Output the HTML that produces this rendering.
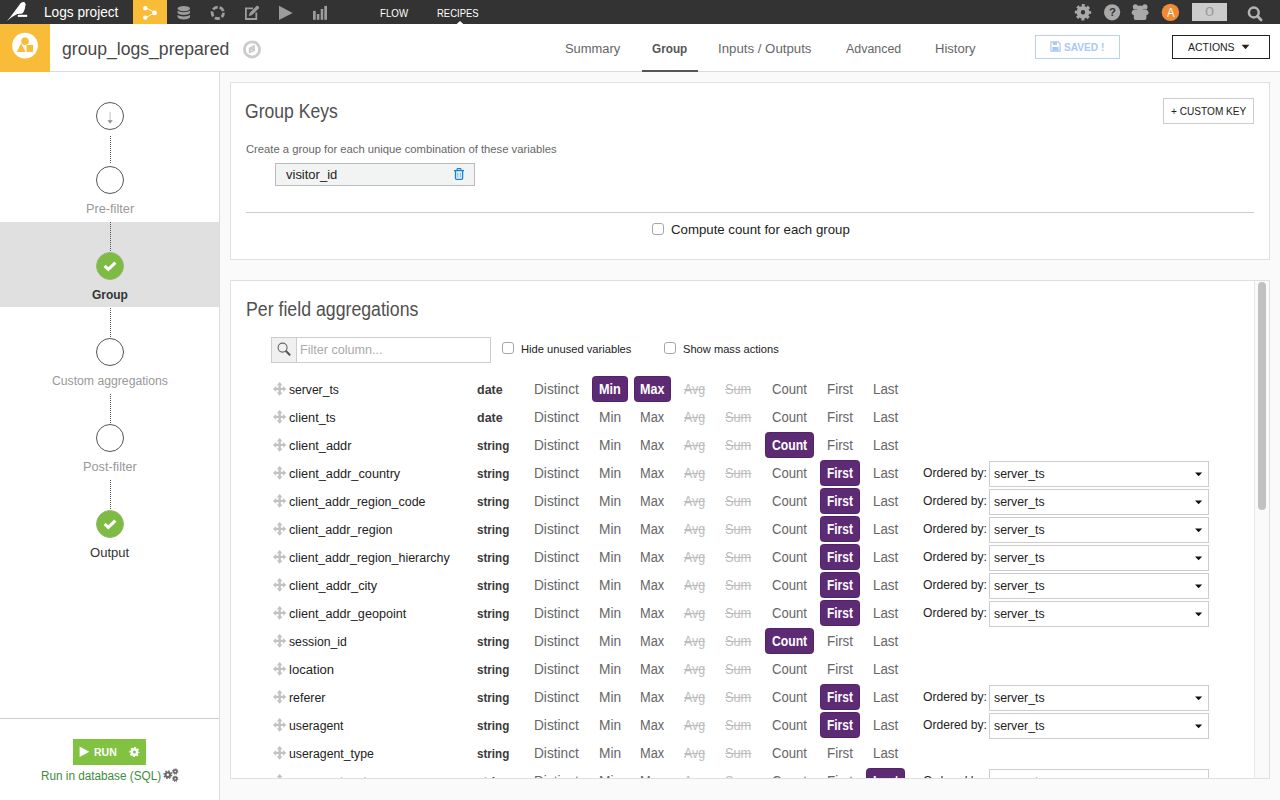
<!DOCTYPE html>
<html lang="en">
<head>
<meta charset="utf-8">
<title>group_logs_prepared - Logs project</title>
<style>
*{box-sizing:border-box;margin:0;padding:0}
html,body{width:1280px;height:800px;overflow:hidden}
body{font-family:"Liberation Sans",sans-serif;font-size:13px;color:#333;background:#fafafa;position:relative}
.a{position:absolute}
.t{position:absolute;white-space:nowrap;line-height:1;transform-origin:0 0}
svg{display:block;overflow:visible}
</style>
</head>
<body>
<div class="a" style="left:0px;top:0px;width:1280px;height:24px;background:#333"></div>
<div class="a" style="left:133px;top:0px;width:34px;height:24px;background:#f8bc38"></div>
<span class="t" style="left:43.72px;top:5px;font-size:14.5px;color:#fff;transform:scaleX(0.9416);">Logs project</span>
<span class="t" style="left:380.11px;top:8px;font-size:11px;color:#fff;transform:scaleX(0.8831);">FLOW</span>
<span class="t" style="left:436.89px;top:8px;font-size:11px;color:#fff;transform:scaleX(0.8627);">RECIPES</span>
<svg class="a" style="left:0;top:0" width="1280" height="24" viewBox="0 0 1280 24">
<path d="M6.9 21 C11 16.5 15 10.5 19.3 5 C20.3 3.2 22 1.9 23.7 2 C24.9 2.1 25.5 3.1 25.4 4.2 L26.3 4.9 L25.3 5.3 C25.2 8.6 24.3 11.6 22.6 13.2 C21 13.9 19 13.8 17.4 14 C13.6 15.6 10.4 18.4 6.9 21 Z" fill="#fff"/>
<rect x="17.8" y="14.8" width="9.4" height="2.1" fill="#fff"/>
<g fill="#fff" stroke="none"><path d="M145.5 7.6 L155 12.6 L145.5 17.8" fill="none" stroke="#fff" stroke-width=".9"/><circle cx="145.3" cy="8.2" r="2.2"/><circle cx="145.3" cy="17.6" r="2.2"/><circle cx="154.6" cy="12.9" r="2.4"/></g>
<g fill="#9c9c9c"><ellipse cx="183.8" cy="8.6" rx="6.2" ry="2.7"/><path d="M177.6 10.6 C179.4 12.9 188.2 12.9 190 10.6 V13 C188.2 15.6 179.4 15.6 177.6 13 Z"/><path d="M177.6 14.8 C179.4 17.1 188.2 17.1 190 14.8 V17.2 C188.2 20.2 179.4 20.2 177.6 17.2 Z"/></g>
<circle cx="217.8" cy="12.8" r="5.7" fill="none" stroke="#9c9c9c" stroke-width="2.8" stroke-dasharray="5.2 1.963" stroke-dashoffset="0.6"/>
<path d="M253 8.3 H245.9 V19 H256.3 V12.6" fill="none" stroke="#9c9c9c" stroke-width="1.8"/><path d="M248.7 15.9 L249.6 12.9 L256.4 6.1 Q257.6 5.3 258.6 6.4 Q259.5 7.4 258.8 8.5 L251.8 15.2 Z" fill="#9c9c9c"/>
<path d="M279 5.8 L292.7 12.9 L279 19.9 Z" fill="#9c9c9c"/>
<g fill="#9c9c9c"><rect x="313" y="10.9" width="2.7" height="8.9"/><rect x="316.8" y="14" width="2.6" height="5.8"/><rect x="320.7" y="9" width="2.5" height="10.8"/><rect x="324.3" y="5.9" width="2.7" height="13.9"/></g>
<path d="M456.7 24 L460 21 L463.3 24 Z" fill="#fff"/>
<g><circle cx="1083" cy="12.3" r="4.3" fill="none" stroke="#a9a9a9" stroke-width="4.2"/><circle cx="1083" cy="12.3" r="6.9" fill="none" stroke="#a9a9a9" stroke-width="2.6" stroke-dasharray="2.9 2.52" stroke-dashoffset="1.4"/></g>
<circle cx="1112.1" cy="12.3" r="8.1" fill="#a9a9a9"/>
<g fill="#a9a9a9"><circle cx="1135.4" cy="6.9" r="2.6"/><circle cx="1144.9" cy="6.9" r="2.6"/><circle cx="1140.1" cy="8.7" r="3.3"/><path d="M1131.6 13.6 Q1131.6 9.8 1134.6 9.8 H1145.6 Q1148.6 9.8 1148.6 13.6 L1147.2 15 H1146.4 V18.2 Q1146.4 19.9 1144.6 19.9 H1135.6 Q1133.8 19.9 1133.8 18.2 V15 H1133 Z"/></g>
<circle cx="1170.4" cy="12.4" r="8.7" fill="#f08a35"/>
<rect x="1192" y="3" width="35" height="18" fill="#ccc"/>
<circle cx="1253.8" cy="12.5" r="4.9" fill="none" stroke="#b4b4b4" stroke-width="2.5"/><path d="M1257.5 16.3 L1261.1 19.9" stroke="#b4b4b4" stroke-width="2.8" stroke-linecap="round"/>
</svg>
<span class="t" style="left:1108.96px;top:7px;font-size:11.5px;font-weight:bold;color:#333;transform:scaleX(0.9882);">?</span>
<span class="t" style="left:1166.70px;top:7px;font-size:12px;color:#fff;transform:scaleX(0.9521);">A</span>
<span class="t" style="left:1205.00px;top:6px;font-size:12.5px;color:#9a9a9a;transform:scaleX(1.3087);">0</span>
<div class="a" style="left:0px;top:24px;width:1280px;height:48px;background:#fff;border-bottom:1px solid #dadcde"></div>
<div class="a" style="left:0px;top:24px;width:50px;height:48px;background:#f8bc38"></div>
<svg class="a" style="left:0;top:24px" width="280" height="48" viewBox="0 24 280 48">
<circle cx="25" cy="45.6" r="12.9" fill="#fff"/>
<circle cx="25" cy="41.2" r="3.8" fill="#f8bc38"/><path d="M16.8 51.9 L21.2 43.2 L25.6 51.9 Z" fill="#f8bc38"/><rect x="26.5" y="45" width="6.6" height="6.9" fill="#f8bc38"/>
<circle cx="252" cy="49.4" r="7.6" fill="#fff" stroke="#ccc" stroke-width="2.8"/><path d="M248.8 47.7 L254.9 44.7 L254.9 50.9 L248.8 53.7 Z" fill="#ccc"/><circle cx="251.6" cy="50.3" r=".6" fill="#fff"/>
</svg>
<span class="t" style="left:61.77px;top:39px;font-size:19px;color:#484848;transform:scaleX(0.9261);">group_logs_prepared</span>
<span class="t" style="left:565.46px;top:43px;font-size:12.5px;color:#666;transform:scaleX(1.0337);">Summary</span>
<span class="t" style="left:651.87px;top:43px;font-size:12.5px;font-weight:bold;color:#555;transform:scaleX(0.9417);">Group</span>
<span class="t" style="left:718.27px;top:43px;font-size:12.5px;color:#666;transform:scaleX(1.0590);">Inputs / Outputs</span>
<span class="t" style="left:845.58px;top:43px;font-size:12.5px;color:#666;transform:scaleX(0.9925);">Advanced</span>
<span class="t" style="left:935.39px;top:43px;font-size:12.5px;color:#666;transform:scaleX(1.0428);">History</span>
<div class="a" style="left:642px;top:70px;width:56px;height:2px;background:#555"></div>
<div class="a" style="left:1035px;top:35px;width:85px;height:24px;border:1px solid #b5d2f6;background:#fff"></div>
<svg class="a" style="left:1050px;top:41px" width="11" height="11" viewBox="0 0 11 11"><path d="M.9 .9 H8.2 L10.1 2.8 V10.1 H.9 Z" fill="none" stroke="#a9c9f4" stroke-width="1.2"/><rect x="2.8" y="1" width="4.2" height="2.9" fill="#a9c9f4"/><rect x="2.4" y="6" width="6.2" height="3.8" fill="#a9c9f4"/></svg>
<span class="t" style="left:1063.56px;top:42px;font-size:11.5px;font-weight:bold;color:#a9c9f4;transform:scaleX(0.8790);">SAVED !</span>
<div class="a" style="left:1172px;top:35px;width:98px;height:24px;border:1px solid #222;background:#fff"></div>
<span class="t" style="left:1187.72px;top:42px;font-size:11.5px;color:#222;transform:scaleX(0.9116);">ACTIONS</span>
<svg class="a" style="left:1241px;top:44px" width="9" height="6" viewBox="0 0 9 6"><path d="M.6 .8 H8.4 L4.5 5.2 Z" fill="#222"/></svg>
<div class="a" style="left:0px;top:72px;width:220px;height:728px;background:#fff;border-right:1px solid #dadcde"></div>
<div class="a" style="left:0px;top:222px;width:219px;height:85px;background:#e0e0e0"></div>
<div class="a" style="left:110px;top:136px;width:1px;height:28px;background:repeating-linear-gradient(to bottom,#555 0,#555 1px,transparent 1px,transparent 2px)"></div>
<div class="a" style="left:110px;top:222px;width:1px;height:29px;background:repeating-linear-gradient(to bottom,#555 0,#555 1px,transparent 1px,transparent 2px)"></div>
<div class="a" style="left:110px;top:308px;width:1px;height:29px;background:repeating-linear-gradient(to bottom,#555 0,#555 1px,transparent 1px,transparent 2px)"></div>
<div class="a" style="left:110px;top:394px;width:1px;height:29px;background:repeating-linear-gradient(to bottom,#555 0,#555 1px,transparent 1px,transparent 2px)"></div>
<div class="a" style="left:110px;top:480px;width:1px;height:29px;background:repeating-linear-gradient(to bottom,#555 0,#555 1px,transparent 1px,transparent 2px)"></div>
<div class="a" style="left:96px;top:102px;width:28px;height:28px;border-radius:50%;background:#fff;border:1px solid #555"></div>
<div class="a" style="left:96px;top:166px;width:28px;height:28px;border-radius:50%;background:#fff;border:1px solid #555"></div>
<div class="a" style="left:96px;top:252px;width:28px;height:28px;border-radius:50%;background:#7dbb42;border:1px solid #98b877"></div>
<svg class="a" style="left:102px;top:260px" width="16" height="12" viewBox="0 0 16 12"><path d="M2.6 5.9 L6.3 9.3 L13.4 2.6" fill="none" stroke="#fff" stroke-width="3.1"/></svg>
<div class="a" style="left:96px;top:338px;width:28px;height:28px;border-radius:50%;background:#fff;border:1px solid #555"></div>
<div class="a" style="left:96px;top:424px;width:28px;height:28px;border-radius:50%;background:#fff;border:1px solid #555"></div>
<div class="a" style="left:96px;top:510px;width:28px;height:28px;border-radius:50%;background:#7dbb42;border:1px solid #98b877"></div>
<svg class="a" style="left:102px;top:518px" width="16" height="12" viewBox="0 0 16 12"><path d="M2.6 5.9 L6.3 9.3 L13.4 2.6" fill="none" stroke="#fff" stroke-width="3.1"/></svg>
<svg class="a" style="left:106px;top:111px" width="9" height="14" viewBox="106 111 9 14"><rect x="109.6" y="112" width="1" height="9.5" fill="#b9c0ca"/><path d="M107.5 120.3 H112.7 L110.1 123.6 Z" fill="#8c8c8c"/></svg>
<span class="t" style="left:85.86px;top:203px;font-size:12.5px;color:#999;transform:scaleX(1.0196);">Pre-filter</span>
<span class="t" style="left:92.04px;top:289px;font-size:12.5px;font-weight:bold;color:#333;transform:scaleX(0.9578);">Group</span>
<span class="t" style="left:52.02px;top:375px;font-size:12.5px;color:#999;transform:scaleX(0.9760);">Custom aggregations</span>
<span class="t" style="left:82.50px;top:461px;font-size:12.5px;color:#999;transform:scaleX(1.0200);">Post-filter</span>
<span class="t" style="left:90.03px;top:547px;font-size:12.5px;color:#333;transform:scaleX(1.0452);">Output</span>
<div class="a" style="left:0px;top:718px;width:219px;height:1px;background:#ccc"></div>
<div class="a" style="left:73px;top:739px;width:73px;height:26px;background:#81c241"></div>
<svg class="a" style="left:79px;top:746px" width="11" height="12" viewBox="0 0 11 12"><path d="M.6 .4 L10.3 5.75 L.6 11.1 Z" fill="#fff"/></svg>
<span class="t" style="left:94.12px;top:747px;font-size:11.5px;font-weight:bold;color:#fff;transform:scaleX(0.9173);">RUN</span>
<svg class="a" style="left:129px;top:746px" width="11" height="12" viewBox="0 0 11 12"><circle cx="5.4" cy="6" r="2.7" fill="none" stroke="#fff" stroke-width="2.4"/><circle cx="5.4" cy="6" r="4.3" fill="none" stroke="#fff" stroke-width="1.6" stroke-dasharray="1.75 1.63" stroke-dashoffset=".8"/></svg>
<span class="t" style="left:41.05px;top:770px;font-size:12.5px;color:#3d8b3d;transform:scaleX(0.9392);">Run in database (SQL)</span>
<svg class="a" style="left:163px;top:768px" width="16" height="14" viewBox="0 0 16 14"><g fill="none" stroke="#6a6a6a"><circle cx="4.8" cy="6.8" r="2.3" stroke-width="2.2"/><circle cx="4.8" cy="6.8" r="3.8" stroke-width="1.4" stroke-dasharray="1.55 1.43"/><circle cx="12.2" cy="3.5" r="1.6" stroke-width="1.7"/><circle cx="12.2" cy="3.5" r="2.6" stroke-width="1.1" stroke-dasharray="1.02 1.02"/><circle cx="12.2" cy="10.7" r="1.6" stroke-width="1.7"/><circle cx="12.2" cy="10.7" r="2.6" stroke-width="1.1" stroke-dasharray="1.02 1.02"/></g></svg>
<div class="a" style="left:230px;top:82px;width:1040px;height:178px;background:#fff;border:1px solid #dfe0e1"></div>
<span class="t" style="left:245.23px;top:101px;font-size:20px;color:#505050;transform:scaleX(0.8781);">Group Keys</span>
<div class="a" style="left:1163px;top:98px;width:91px;height:26px;border:1px solid #ccc;background:#fff"></div>
<span class="t" style="left:1171.24px;top:106px;font-size:11px;color:#222;transform:scaleX(0.9183);">+ CUSTOM KEY</span>
<span class="t" style="left:245.77px;top:144px;font-size:11.5px;color:#666;transform:scaleX(0.9776);">Create a group for each unique combination of these variables</span>
<div class="a" style="left:275px;top:163px;width:200px;height:23px;border:1px solid #b9bbbd;background:#f2f3f3"></div>
<span class="t" style="left:286.17px;top:169px;font-size:12.5px;color:#222;transform:scaleX(1.0389);">visitor_id</span>
<svg class="a" style="left:453px;top:167px" width="12" height="14" viewBox="453 167 12 14"><g fill="none" stroke="#1583d6"><path d="M453.9 170.6 H464" stroke-width="1.3"/><path d="M457 170.4 V169.4 Q457 168.6 457.8 168.6 H460.2 Q461 168.6 461 169.4 V170.4" stroke-width="1.1"/><path d="M455.5 171 V178.3 Q455.5 179.4 456.6 179.4 H461.5 Q462.6 179.4 462.6 178.3 V171" stroke-width="1.3"/><path d="M457.8 172.6 V177.6 M460.3 172.6 V177.6" stroke-width="1" stroke-opacity=".55"/></g></svg>
<div class="a" style="left:246px;top:212px;width:1008px;height:1px;background:#ccc"></div>
<div class="a" style="left:652px;top:223px;width:12px;height:12px;border:1px solid #a6a6a6;border-radius:3px;background:#fff"></div>
<span class="t" style="left:671.27px;top:223px;font-size:13px;color:#222;transform:scaleX(1.0179);">Compute count for each group</span>
<div class="a" style="left:230px;top:280px;width:1040px;height:499px;background:#fff;border:1px solid #dfe0e1"></div>
<div class="a" style="left:0;top:0;width:1280px;height:778px;overflow:hidden">
<span class="t" style="left:245.50px;top:299px;font-size:20px;color:#505050;transform:scaleX(0.8859);">Per field aggregations</span>
<div class="a" style="left:271px;top:337px;width:220px;height:26px;border:1px solid #ccc;background:#fff"></div>
<div class="a" style="left:272px;top:338px;width:25px;height:24px;background:#f0f0f0;border-right:1px solid #ccc"></div>
<svg class="a" style="left:277px;top:342px" width="15" height="15" viewBox="0 0 15 15"><circle cx="5.6" cy="5.6" r="4.5" fill="none" stroke="#666" stroke-width="1.1"/><path d="M9.2 9.2 L12.6 12.8" stroke="#555" stroke-width="2" stroke-linecap="round"/></svg>
<span class="t" style="left:300.39px;top:344px;font-size:12.5px;color:#aaa;transform:scaleX(1.0069);">Filter column...</span>
<div class="a" style="left:502px;top:342px;width:12px;height:12px;border:1px solid #a6a6a6;border-radius:3px;background:#fff"></div>
<span class="t" style="left:521.29px;top:344px;font-size:11.5px;color:#222;transform:scaleX(0.9702);">Hide unused variables</span>
<div class="a" style="left:664px;top:342px;width:12px;height:12px;border:1px solid #a6a6a6;border-radius:3px;background:#fff"></div>
<span class="t" style="left:682.77px;top:344px;font-size:11.5px;color:#222;transform:scaleX(0.9663);">Show mass actions</span>
<svg class="a" style="left:272.7px;top:382px" width="13.3" height="13.8" viewBox="0 0 13.3 13.8"><path d="M6.65 0 L9.6 3.2 H7.85 V5.7 H10.1 V3.95 L13.3 6.9 L10.1 9.85 V8.1 H7.85 V10.6 H9.6 L6.65 13.8 L3.7 10.6 H5.45 V8.1 H3.2 V9.85 L0 6.9 L3.2 3.95 V5.7 H5.45 V3.2 H3.7 Z" fill="#c2c2c2"/></svg>
<span class="t" style="left:288.88px;top:384px;font-size:12.5px;color:#222;transform:scaleX(0.9689);">server_ts</span>
<span class="t" style="left:476.63px;top:384px;font-size:12px;font-weight:bold;color:#3a3a3a;transform:scaleX(1.0404);">date</span>
<span class="t" style="left:534.25px;top:382px;font-size:14px;color:#666;transform:scaleX(0.9753);">Distinct</span>
<div class="a" style="left:592px;top:376px;width:36px;height:26px;background:#5d2a74;border:1px solid #53236a;border-radius:3.5px"></div>
<span class="t" style="left:599.04px;top:382px;font-size:14px;font-weight:bold;color:#fff;transform:scaleX(0.9055);">Min</span>
<div class="a" style="left:634px;top:376px;width:37px;height:26px;background:#5d2a74;border:1px solid #53236a;border-radius:3.5px"></div>
<span class="t" style="left:640.31px;top:382px;font-size:14px;font-weight:bold;color:#fff;transform:scaleX(0.8951);">Max</span>
<span class="t" style="left:683.87px;top:382px;font-size:14px;color:#bdbdbd;transform:scaleX(0.8833);text-decoration:line-through">Avg</span>
<span class="t" style="left:724.62px;top:382px;font-size:14px;color:#bdbdbd;transform:scaleX(0.9110);text-decoration:line-through">Sum</span>
<span class="t" style="left:771.74px;top:382px;font-size:14px;color:#666;transform:scaleX(0.9363);">Count</span>
<span class="t" style="left:826.82px;top:382px;font-size:14px;color:#666;transform:scaleX(0.9540);">First</span>
<span class="t" style="left:872.71px;top:382px;font-size:14px;color:#666;transform:scaleX(0.9531);">Last</span>
<svg class="a" style="left:272.7px;top:410px" width="13.3" height="13.8" viewBox="0 0 13.3 13.8"><path d="M6.65 0 L9.6 3.2 H7.85 V5.7 H10.1 V3.95 L13.3 6.9 L10.1 9.85 V8.1 H7.85 V10.6 H9.6 L6.65 13.8 L3.7 10.6 H5.45 V8.1 H3.2 V9.85 L0 6.9 L3.2 3.95 V5.7 H5.45 V3.2 H3.7 Z" fill="#c2c2c2"/></svg>
<span class="t" style="left:288.86px;top:412px;font-size:12.5px;color:#222;transform:scaleX(1.0171);">client_ts</span>
<span class="t" style="left:476.63px;top:412px;font-size:12px;font-weight:bold;color:#3a3a3a;transform:scaleX(1.0404);">date</span>
<span class="t" style="left:534.25px;top:410px;font-size:14px;color:#666;transform:scaleX(0.9753);">Distinct</span>
<span class="t" style="left:598.95px;top:410px;font-size:14px;color:#666;transform:scaleX(0.9799);">Min</span>
<span class="t" style="left:640.40px;top:410px;font-size:14px;color:#666;transform:scaleX(0.9132);">Max</span>
<span class="t" style="left:683.87px;top:410px;font-size:14px;color:#bdbdbd;transform:scaleX(0.8833);text-decoration:line-through">Avg</span>
<span class="t" style="left:724.62px;top:410px;font-size:14px;color:#bdbdbd;transform:scaleX(0.9110);text-decoration:line-through">Sum</span>
<span class="t" style="left:771.74px;top:410px;font-size:14px;color:#666;transform:scaleX(0.9363);">Count</span>
<span class="t" style="left:826.82px;top:410px;font-size:14px;color:#666;transform:scaleX(0.9540);">First</span>
<span class="t" style="left:872.71px;top:410px;font-size:14px;color:#666;transform:scaleX(0.9531);">Last</span>
<svg class="a" style="left:272.7px;top:438px" width="13.3" height="13.8" viewBox="0 0 13.3 13.8"><path d="M6.65 0 L9.6 3.2 H7.85 V5.7 H10.1 V3.95 L13.3 6.9 L10.1 9.85 V8.1 H7.85 V10.6 H9.6 L6.65 13.8 L3.7 10.6 H5.45 V8.1 H3.2 V9.85 L0 6.9 L3.2 3.95 V5.7 H5.45 V3.2 H3.7 Z" fill="#c2c2c2"/></svg>
<span class="t" style="left:288.73px;top:440px;font-size:12.5px;color:#222;transform:scaleX(1.0216);">client_addr</span>
<span class="t" style="left:476.74px;top:440px;font-size:12px;font-weight:bold;color:#3a3a3a;transform:scaleX(0.9688);">string</span>
<span class="t" style="left:534.25px;top:438px;font-size:14px;color:#666;transform:scaleX(0.9753);">Distinct</span>
<span class="t" style="left:598.95px;top:438px;font-size:14px;color:#666;transform:scaleX(0.9799);">Min</span>
<span class="t" style="left:640.40px;top:438px;font-size:14px;color:#666;transform:scaleX(0.9132);">Max</span>
<span class="t" style="left:683.87px;top:438px;font-size:14px;color:#bdbdbd;transform:scaleX(0.8833);text-decoration:line-through">Avg</span>
<span class="t" style="left:724.62px;top:438px;font-size:14px;color:#bdbdbd;transform:scaleX(0.9110);text-decoration:line-through">Sum</span>
<div class="a" style="left:765px;top:432px;width:49px;height:26px;background:#5d2a74;border:1px solid #53236a;border-radius:3.5px"></div>
<span class="t" style="left:771.94px;top:438px;font-size:14px;font-weight:bold;color:#fff;transform:scaleX(0.8702);">Count</span>
<span class="t" style="left:826.82px;top:438px;font-size:14px;color:#666;transform:scaleX(0.9540);">First</span>
<span class="t" style="left:872.71px;top:438px;font-size:14px;color:#666;transform:scaleX(0.9531);">Last</span>
<svg class="a" style="left:272.7px;top:466px" width="13.3" height="13.8" viewBox="0 0 13.3 13.8"><path d="M6.65 0 L9.6 3.2 H7.85 V5.7 H10.1 V3.95 L13.3 6.9 L10.1 9.85 V8.1 H7.85 V10.6 H9.6 L6.65 13.8 L3.7 10.6 H5.45 V8.1 H3.2 V9.85 L0 6.9 L3.2 3.95 V5.7 H5.45 V3.2 H3.7 Z" fill="#c2c2c2"/></svg>
<span class="t" style="left:288.75px;top:468px;font-size:12.5px;color:#222;transform:scaleX(1.0197);">client_addr_country</span>
<span class="t" style="left:476.74px;top:468px;font-size:12px;font-weight:bold;color:#3a3a3a;transform:scaleX(0.9688);">string</span>
<span class="t" style="left:534.25px;top:466px;font-size:14px;color:#666;transform:scaleX(0.9753);">Distinct</span>
<span class="t" style="left:598.95px;top:466px;font-size:14px;color:#666;transform:scaleX(0.9799);">Min</span>
<span class="t" style="left:640.40px;top:466px;font-size:14px;color:#666;transform:scaleX(0.9132);">Max</span>
<span class="t" style="left:683.87px;top:466px;font-size:14px;color:#bdbdbd;transform:scaleX(0.8833);text-decoration:line-through">Avg</span>
<span class="t" style="left:724.62px;top:466px;font-size:14px;color:#bdbdbd;transform:scaleX(0.9110);text-decoration:line-through">Sum</span>
<span class="t" style="left:771.74px;top:466px;font-size:14px;color:#666;transform:scaleX(0.9363);">Count</span>
<div class="a" style="left:820px;top:460px;width:40px;height:26px;background:#5d2a74;border:1px solid #53236a;border-radius:3.5px"></div>
<span class="t" style="left:827.26px;top:466px;font-size:14px;font-weight:bold;color:#fff;transform:scaleX(0.8526);">First</span>
<span class="t" style="left:872.71px;top:466px;font-size:14px;color:#666;transform:scaleX(0.9531);">Last</span>
<span class="t" style="left:922.78px;top:467px;font-size:12.5px;color:#222;transform:scaleX(0.9693);">Ordered by:</span>
<div class="a" style="left:989px;top:461px;width:220px;height:26px;border:1px solid #ccc;background:#fff"></div>
<span class="t" style="left:993.92px;top:468px;font-size:12.5px;color:#222;transform:scaleX(0.9840);">server_ts</span>
<svg class="a" style="left:1195px;top:472px" width="8" height="5" viewBox="0 0 8 5"><path d="M0 .4 H7.2 L3.6 4.3 Z" fill="#111"/></svg>
<svg class="a" style="left:272.7px;top:494px" width="13.3" height="13.8" viewBox="0 0 13.3 13.8"><path d="M6.65 0 L9.6 3.2 H7.85 V5.7 H10.1 V3.95 L13.3 6.9 L10.1 9.85 V8.1 H7.85 V10.6 H9.6 L6.65 13.8 L3.7 10.6 H5.45 V8.1 H3.2 V9.85 L0 6.9 L3.2 3.95 V5.7 H5.45 V3.2 H3.7 Z" fill="#c2c2c2"/></svg>
<span class="t" style="left:288.59px;top:496px;font-size:12.5px;color:#222;transform:scaleX(0.9971);">client_addr_region_code</span>
<span class="t" style="left:476.74px;top:496px;font-size:12px;font-weight:bold;color:#3a3a3a;transform:scaleX(0.9688);">string</span>
<span class="t" style="left:534.25px;top:494px;font-size:14px;color:#666;transform:scaleX(0.9753);">Distinct</span>
<span class="t" style="left:598.95px;top:494px;font-size:14px;color:#666;transform:scaleX(0.9799);">Min</span>
<span class="t" style="left:640.40px;top:494px;font-size:14px;color:#666;transform:scaleX(0.9132);">Max</span>
<span class="t" style="left:683.87px;top:494px;font-size:14px;color:#bdbdbd;transform:scaleX(0.8833);text-decoration:line-through">Avg</span>
<span class="t" style="left:724.62px;top:494px;font-size:14px;color:#bdbdbd;transform:scaleX(0.9110);text-decoration:line-through">Sum</span>
<span class="t" style="left:771.74px;top:494px;font-size:14px;color:#666;transform:scaleX(0.9363);">Count</span>
<div class="a" style="left:820px;top:488px;width:40px;height:26px;background:#5d2a74;border:1px solid #53236a;border-radius:3.5px"></div>
<span class="t" style="left:827.26px;top:494px;font-size:14px;font-weight:bold;color:#fff;transform:scaleX(0.8526);">First</span>
<span class="t" style="left:872.71px;top:494px;font-size:14px;color:#666;transform:scaleX(0.9531);">Last</span>
<span class="t" style="left:922.78px;top:495px;font-size:12.5px;color:#222;transform:scaleX(0.9693);">Ordered by:</span>
<div class="a" style="left:989px;top:489px;width:220px;height:26px;border:1px solid #ccc;background:#fff"></div>
<span class="t" style="left:993.92px;top:496px;font-size:12.5px;color:#222;transform:scaleX(0.9840);">server_ts</span>
<svg class="a" style="left:1195px;top:500px" width="8" height="5" viewBox="0 0 8 5"><path d="M0 .4 H7.2 L3.6 4.3 Z" fill="#111"/></svg>
<svg class="a" style="left:272.7px;top:522px" width="13.3" height="13.8" viewBox="0 0 13.3 13.8"><path d="M6.65 0 L9.6 3.2 H7.85 V5.7 H10.1 V3.95 L13.3 6.9 L10.1 9.85 V8.1 H7.85 V10.6 H9.6 L6.65 13.8 L3.7 10.6 H5.45 V8.1 H3.2 V9.85 L0 6.9 L3.2 3.95 V5.7 H5.45 V3.2 H3.7 Z" fill="#c2c2c2"/></svg>
<span class="t" style="left:288.89px;top:524px;font-size:12.5px;color:#222;transform:scaleX(1.0063);">client_addr_region</span>
<span class="t" style="left:476.74px;top:524px;font-size:12px;font-weight:bold;color:#3a3a3a;transform:scaleX(0.9688);">string</span>
<span class="t" style="left:534.25px;top:522px;font-size:14px;color:#666;transform:scaleX(0.9753);">Distinct</span>
<span class="t" style="left:598.95px;top:522px;font-size:14px;color:#666;transform:scaleX(0.9799);">Min</span>
<span class="t" style="left:640.40px;top:522px;font-size:14px;color:#666;transform:scaleX(0.9132);">Max</span>
<span class="t" style="left:683.87px;top:522px;font-size:14px;color:#bdbdbd;transform:scaleX(0.8833);text-decoration:line-through">Avg</span>
<span class="t" style="left:724.62px;top:522px;font-size:14px;color:#bdbdbd;transform:scaleX(0.9110);text-decoration:line-through">Sum</span>
<span class="t" style="left:771.74px;top:522px;font-size:14px;color:#666;transform:scaleX(0.9363);">Count</span>
<div class="a" style="left:820px;top:516px;width:40px;height:26px;background:#5d2a74;border:1px solid #53236a;border-radius:3.5px"></div>
<span class="t" style="left:827.26px;top:522px;font-size:14px;font-weight:bold;color:#fff;transform:scaleX(0.8526);">First</span>
<span class="t" style="left:872.71px;top:522px;font-size:14px;color:#666;transform:scaleX(0.9531);">Last</span>
<span class="t" style="left:922.78px;top:523px;font-size:12.5px;color:#222;transform:scaleX(0.9693);">Ordered by:</span>
<div class="a" style="left:989px;top:517px;width:220px;height:26px;border:1px solid #ccc;background:#fff"></div>
<span class="t" style="left:993.92px;top:524px;font-size:12.5px;color:#222;transform:scaleX(0.9840);">server_ts</span>
<svg class="a" style="left:1195px;top:528px" width="8" height="5" viewBox="0 0 8 5"><path d="M0 .4 H7.2 L3.6 4.3 Z" fill="#111"/></svg>
<svg class="a" style="left:272.7px;top:550px" width="13.3" height="13.8" viewBox="0 0 13.3 13.8"><path d="M6.65 0 L9.6 3.2 H7.85 V5.7 H10.1 V3.95 L13.3 6.9 L10.1 9.85 V8.1 H7.85 V10.6 H9.6 L6.65 13.8 L3.7 10.6 H5.45 V8.1 H3.2 V9.85 L0 6.9 L3.2 3.95 V5.7 H5.45 V3.2 H3.7 Z" fill="#c2c2c2"/></svg>
<span class="t" style="left:288.80px;top:552px;font-size:12.5px;color:#222;transform:scaleX(0.9970);">client_addr_region_hierarchy</span>
<span class="t" style="left:476.74px;top:552px;font-size:12px;font-weight:bold;color:#3a3a3a;transform:scaleX(0.9688);">string</span>
<span class="t" style="left:534.25px;top:550px;font-size:14px;color:#666;transform:scaleX(0.9753);">Distinct</span>
<span class="t" style="left:598.95px;top:550px;font-size:14px;color:#666;transform:scaleX(0.9799);">Min</span>
<span class="t" style="left:640.40px;top:550px;font-size:14px;color:#666;transform:scaleX(0.9132);">Max</span>
<span class="t" style="left:683.87px;top:550px;font-size:14px;color:#bdbdbd;transform:scaleX(0.8833);text-decoration:line-through">Avg</span>
<span class="t" style="left:724.62px;top:550px;font-size:14px;color:#bdbdbd;transform:scaleX(0.9110);text-decoration:line-through">Sum</span>
<span class="t" style="left:771.74px;top:550px;font-size:14px;color:#666;transform:scaleX(0.9363);">Count</span>
<div class="a" style="left:820px;top:544px;width:40px;height:26px;background:#5d2a74;border:1px solid #53236a;border-radius:3.5px"></div>
<span class="t" style="left:827.26px;top:550px;font-size:14px;font-weight:bold;color:#fff;transform:scaleX(0.8526);">First</span>
<span class="t" style="left:872.71px;top:550px;font-size:14px;color:#666;transform:scaleX(0.9531);">Last</span>
<span class="t" style="left:922.78px;top:551px;font-size:12.5px;color:#222;transform:scaleX(0.9693);">Ordered by:</span>
<div class="a" style="left:989px;top:545px;width:220px;height:26px;border:1px solid #ccc;background:#fff"></div>
<span class="t" style="left:993.92px;top:552px;font-size:12.5px;color:#222;transform:scaleX(0.9840);">server_ts</span>
<svg class="a" style="left:1195px;top:556px" width="8" height="5" viewBox="0 0 8 5"><path d="M0 .4 H7.2 L3.6 4.3 Z" fill="#111"/></svg>
<svg class="a" style="left:272.7px;top:578px" width="13.3" height="13.8" viewBox="0 0 13.3 13.8"><path d="M6.65 0 L9.6 3.2 H7.85 V5.7 H10.1 V3.95 L13.3 6.9 L10.1 9.85 V8.1 H7.85 V10.6 H9.6 L6.65 13.8 L3.7 10.6 H5.45 V8.1 H3.2 V9.85 L0 6.9 L3.2 3.95 V5.7 H5.45 V3.2 H3.7 Z" fill="#c2c2c2"/></svg>
<span class="t" style="left:288.64px;top:580px;font-size:12.5px;color:#222;transform:scaleX(1.0152);">client_addr_city</span>
<span class="t" style="left:476.74px;top:580px;font-size:12px;font-weight:bold;color:#3a3a3a;transform:scaleX(0.9688);">string</span>
<span class="t" style="left:534.25px;top:578px;font-size:14px;color:#666;transform:scaleX(0.9753);">Distinct</span>
<span class="t" style="left:598.95px;top:578px;font-size:14px;color:#666;transform:scaleX(0.9799);">Min</span>
<span class="t" style="left:640.40px;top:578px;font-size:14px;color:#666;transform:scaleX(0.9132);">Max</span>
<span class="t" style="left:683.87px;top:578px;font-size:14px;color:#bdbdbd;transform:scaleX(0.8833);text-decoration:line-through">Avg</span>
<span class="t" style="left:724.62px;top:578px;font-size:14px;color:#bdbdbd;transform:scaleX(0.9110);text-decoration:line-through">Sum</span>
<span class="t" style="left:771.74px;top:578px;font-size:14px;color:#666;transform:scaleX(0.9363);">Count</span>
<div class="a" style="left:820px;top:572px;width:40px;height:26px;background:#5d2a74;border:1px solid #53236a;border-radius:3.5px"></div>
<span class="t" style="left:827.26px;top:578px;font-size:14px;font-weight:bold;color:#fff;transform:scaleX(0.8526);">First</span>
<span class="t" style="left:872.71px;top:578px;font-size:14px;color:#666;transform:scaleX(0.9531);">Last</span>
<span class="t" style="left:922.78px;top:579px;font-size:12.5px;color:#222;transform:scaleX(0.9693);">Ordered by:</span>
<div class="a" style="left:989px;top:573px;width:220px;height:26px;border:1px solid #ccc;background:#fff"></div>
<span class="t" style="left:993.92px;top:580px;font-size:12.5px;color:#222;transform:scaleX(0.9840);">server_ts</span>
<svg class="a" style="left:1195px;top:584px" width="8" height="5" viewBox="0 0 8 5"><path d="M0 .4 H7.2 L3.6 4.3 Z" fill="#111"/></svg>
<svg class="a" style="left:272.7px;top:606px" width="13.3" height="13.8" viewBox="0 0 13.3 13.8"><path d="M6.65 0 L9.6 3.2 H7.85 V5.7 H10.1 V3.95 L13.3 6.9 L10.1 9.85 V8.1 H7.85 V10.6 H9.6 L6.65 13.8 L3.7 10.6 H5.45 V8.1 H3.2 V9.85 L0 6.9 L3.2 3.95 V5.7 H5.45 V3.2 H3.7 Z" fill="#c2c2c2"/></svg>
<span class="t" style="left:288.88px;top:608px;font-size:12.5px;color:#222;transform:scaleX(1.0110);">client_addr_geopoint</span>
<span class="t" style="left:476.74px;top:608px;font-size:12px;font-weight:bold;color:#3a3a3a;transform:scaleX(0.9688);">string</span>
<span class="t" style="left:534.25px;top:606px;font-size:14px;color:#666;transform:scaleX(0.9753);">Distinct</span>
<span class="t" style="left:598.95px;top:606px;font-size:14px;color:#666;transform:scaleX(0.9799);">Min</span>
<span class="t" style="left:640.40px;top:606px;font-size:14px;color:#666;transform:scaleX(0.9132);">Max</span>
<span class="t" style="left:683.87px;top:606px;font-size:14px;color:#bdbdbd;transform:scaleX(0.8833);text-decoration:line-through">Avg</span>
<span class="t" style="left:724.62px;top:606px;font-size:14px;color:#bdbdbd;transform:scaleX(0.9110);text-decoration:line-through">Sum</span>
<span class="t" style="left:771.74px;top:606px;font-size:14px;color:#666;transform:scaleX(0.9363);">Count</span>
<div class="a" style="left:820px;top:600px;width:40px;height:26px;background:#5d2a74;border:1px solid #53236a;border-radius:3.5px"></div>
<span class="t" style="left:827.26px;top:606px;font-size:14px;font-weight:bold;color:#fff;transform:scaleX(0.8526);">First</span>
<span class="t" style="left:872.71px;top:606px;font-size:14px;color:#666;transform:scaleX(0.9531);">Last</span>
<span class="t" style="left:922.78px;top:607px;font-size:12.5px;color:#222;transform:scaleX(0.9693);">Ordered by:</span>
<div class="a" style="left:989px;top:601px;width:220px;height:26px;border:1px solid #ccc;background:#fff"></div>
<span class="t" style="left:993.92px;top:608px;font-size:12.5px;color:#222;transform:scaleX(0.9840);">server_ts</span>
<svg class="a" style="left:1195px;top:612px" width="8" height="5" viewBox="0 0 8 5"><path d="M0 .4 H7.2 L3.6 4.3 Z" fill="#111"/></svg>
<svg class="a" style="left:272.7px;top:634px" width="13.3" height="13.8" viewBox="0 0 13.3 13.8"><path d="M6.65 0 L9.6 3.2 H7.85 V5.7 H10.1 V3.95 L13.3 6.9 L10.1 9.85 V8.1 H7.85 V10.6 H9.6 L6.65 13.8 L3.7 10.6 H5.45 V8.1 H3.2 V9.85 L0 6.9 L3.2 3.95 V5.7 H5.45 V3.2 H3.7 Z" fill="#c2c2c2"/></svg>
<span class="t" style="left:288.87px;top:636px;font-size:12.5px;color:#222;transform:scaleX(0.9798);">session_id</span>
<span class="t" style="left:476.74px;top:636px;font-size:12px;font-weight:bold;color:#3a3a3a;transform:scaleX(0.9688);">string</span>
<span class="t" style="left:534.25px;top:634px;font-size:14px;color:#666;transform:scaleX(0.9753);">Distinct</span>
<span class="t" style="left:598.95px;top:634px;font-size:14px;color:#666;transform:scaleX(0.9799);">Min</span>
<span class="t" style="left:640.40px;top:634px;font-size:14px;color:#666;transform:scaleX(0.9132);">Max</span>
<span class="t" style="left:683.87px;top:634px;font-size:14px;color:#bdbdbd;transform:scaleX(0.8833);text-decoration:line-through">Avg</span>
<span class="t" style="left:724.62px;top:634px;font-size:14px;color:#bdbdbd;transform:scaleX(0.9110);text-decoration:line-through">Sum</span>
<div class="a" style="left:765px;top:628px;width:49px;height:26px;background:#5d2a74;border:1px solid #53236a;border-radius:3.5px"></div>
<span class="t" style="left:771.94px;top:634px;font-size:14px;font-weight:bold;color:#fff;transform:scaleX(0.8702);">Count</span>
<span class="t" style="left:826.82px;top:634px;font-size:14px;color:#666;transform:scaleX(0.9540);">First</span>
<span class="t" style="left:872.71px;top:634px;font-size:14px;color:#666;transform:scaleX(0.9531);">Last</span>
<svg class="a" style="left:272.7px;top:662px" width="13.3" height="13.8" viewBox="0 0 13.3 13.8"><path d="M6.65 0 L9.6 3.2 H7.85 V5.7 H10.1 V3.95 L13.3 6.9 L10.1 9.85 V8.1 H7.85 V10.6 H9.6 L6.65 13.8 L3.7 10.6 H5.45 V8.1 H3.2 V9.85 L0 6.9 L3.2 3.95 V5.7 H5.45 V3.2 H3.7 Z" fill="#c2c2c2"/></svg>
<span class="t" style="left:289.18px;top:664px;font-size:12.5px;color:#222;transform:scaleX(1.0475);">location</span>
<span class="t" style="left:476.74px;top:664px;font-size:12px;font-weight:bold;color:#3a3a3a;transform:scaleX(0.9688);">string</span>
<span class="t" style="left:534.25px;top:662px;font-size:14px;color:#666;transform:scaleX(0.9753);">Distinct</span>
<span class="t" style="left:598.95px;top:662px;font-size:14px;color:#666;transform:scaleX(0.9799);">Min</span>
<span class="t" style="left:640.40px;top:662px;font-size:14px;color:#666;transform:scaleX(0.9132);">Max</span>
<span class="t" style="left:683.87px;top:662px;font-size:14px;color:#bdbdbd;transform:scaleX(0.8833);text-decoration:line-through">Avg</span>
<span class="t" style="left:724.62px;top:662px;font-size:14px;color:#bdbdbd;transform:scaleX(0.9110);text-decoration:line-through">Sum</span>
<span class="t" style="left:771.74px;top:662px;font-size:14px;color:#666;transform:scaleX(0.9363);">Count</span>
<span class="t" style="left:826.82px;top:662px;font-size:14px;color:#666;transform:scaleX(0.9540);">First</span>
<span class="t" style="left:872.71px;top:662px;font-size:14px;color:#666;transform:scaleX(0.9531);">Last</span>
<svg class="a" style="left:272.7px;top:690px" width="13.3" height="13.8" viewBox="0 0 13.3 13.8"><path d="M6.65 0 L9.6 3.2 H7.85 V5.7 H10.1 V3.95 L13.3 6.9 L10.1 9.85 V8.1 H7.85 V10.6 H9.6 L6.65 13.8 L3.7 10.6 H5.45 V8.1 H3.2 V9.85 L0 6.9 L3.2 3.95 V5.7 H5.45 V3.2 H3.7 Z" fill="#c2c2c2"/></svg>
<span class="t" style="left:288.65px;top:692px;font-size:12.5px;color:#222;transform:scaleX(0.9896);">referer</span>
<span class="t" style="left:476.74px;top:692px;font-size:12px;font-weight:bold;color:#3a3a3a;transform:scaleX(0.9688);">string</span>
<span class="t" style="left:534.25px;top:690px;font-size:14px;color:#666;transform:scaleX(0.9753);">Distinct</span>
<span class="t" style="left:598.95px;top:690px;font-size:14px;color:#666;transform:scaleX(0.9799);">Min</span>
<span class="t" style="left:640.40px;top:690px;font-size:14px;color:#666;transform:scaleX(0.9132);">Max</span>
<span class="t" style="left:683.87px;top:690px;font-size:14px;color:#bdbdbd;transform:scaleX(0.8833);text-decoration:line-through">Avg</span>
<span class="t" style="left:724.62px;top:690px;font-size:14px;color:#bdbdbd;transform:scaleX(0.9110);text-decoration:line-through">Sum</span>
<span class="t" style="left:771.74px;top:690px;font-size:14px;color:#666;transform:scaleX(0.9363);">Count</span>
<div class="a" style="left:820px;top:684px;width:40px;height:26px;background:#5d2a74;border:1px solid #53236a;border-radius:3.5px"></div>
<span class="t" style="left:827.26px;top:690px;font-size:14px;font-weight:bold;color:#fff;transform:scaleX(0.8526);">First</span>
<span class="t" style="left:872.71px;top:690px;font-size:14px;color:#666;transform:scaleX(0.9531);">Last</span>
<span class="t" style="left:922.78px;top:691px;font-size:12.5px;color:#222;transform:scaleX(0.9693);">Ordered by:</span>
<div class="a" style="left:989px;top:685px;width:220px;height:26px;border:1px solid #ccc;background:#fff"></div>
<span class="t" style="left:993.92px;top:692px;font-size:12.5px;color:#222;transform:scaleX(0.9840);">server_ts</span>
<svg class="a" style="left:1195px;top:696px" width="8" height="5" viewBox="0 0 8 5"><path d="M0 .4 H7.2 L3.6 4.3 Z" fill="#111"/></svg>
<svg class="a" style="left:272.7px;top:718px" width="13.3" height="13.8" viewBox="0 0 13.3 13.8"><path d="M6.65 0 L9.6 3.2 H7.85 V5.7 H10.1 V3.95 L13.3 6.9 L10.1 9.85 V8.1 H7.85 V10.6 H9.6 L6.65 13.8 L3.7 10.6 H5.45 V8.1 H3.2 V9.85 L0 6.9 L3.2 3.95 V5.7 H5.45 V3.2 H3.7 Z" fill="#c2c2c2"/></svg>
<span class="t" style="left:288.50px;top:720px;font-size:12.5px;color:#222;transform:scaleX(0.9798);">useragent</span>
<span class="t" style="left:476.74px;top:720px;font-size:12px;font-weight:bold;color:#3a3a3a;transform:scaleX(0.9688);">string</span>
<span class="t" style="left:534.25px;top:718px;font-size:14px;color:#666;transform:scaleX(0.9753);">Distinct</span>
<span class="t" style="left:598.95px;top:718px;font-size:14px;color:#666;transform:scaleX(0.9799);">Min</span>
<span class="t" style="left:640.40px;top:718px;font-size:14px;color:#666;transform:scaleX(0.9132);">Max</span>
<span class="t" style="left:683.87px;top:718px;font-size:14px;color:#bdbdbd;transform:scaleX(0.8833);text-decoration:line-through">Avg</span>
<span class="t" style="left:724.62px;top:718px;font-size:14px;color:#bdbdbd;transform:scaleX(0.9110);text-decoration:line-through">Sum</span>
<span class="t" style="left:771.74px;top:718px;font-size:14px;color:#666;transform:scaleX(0.9363);">Count</span>
<div class="a" style="left:820px;top:712px;width:40px;height:26px;background:#5d2a74;border:1px solid #53236a;border-radius:3.5px"></div>
<span class="t" style="left:827.26px;top:718px;font-size:14px;font-weight:bold;color:#fff;transform:scaleX(0.8526);">First</span>
<span class="t" style="left:872.71px;top:718px;font-size:14px;color:#666;transform:scaleX(0.9531);">Last</span>
<span class="t" style="left:922.78px;top:719px;font-size:12.5px;color:#222;transform:scaleX(0.9693);">Ordered by:</span>
<div class="a" style="left:989px;top:713px;width:220px;height:26px;border:1px solid #ccc;background:#fff"></div>
<span class="t" style="left:993.92px;top:720px;font-size:12.5px;color:#222;transform:scaleX(0.9840);">server_ts</span>
<svg class="a" style="left:1195px;top:724px" width="8" height="5" viewBox="0 0 8 5"><path d="M0 .4 H7.2 L3.6 4.3 Z" fill="#111"/></svg>
<svg class="a" style="left:272.7px;top:746px" width="13.3" height="13.8" viewBox="0 0 13.3 13.8"><path d="M6.65 0 L9.6 3.2 H7.85 V5.7 H10.1 V3.95 L13.3 6.9 L10.1 9.85 V8.1 H7.85 V10.6 H9.6 L6.65 13.8 L3.7 10.6 H5.45 V8.1 H3.2 V9.85 L0 6.9 L3.2 3.95 V5.7 H5.45 V3.2 H3.7 Z" fill="#c2c2c2"/></svg>
<span class="t" style="left:288.72px;top:748px;font-size:12.5px;color:#222;transform:scaleX(0.9848);">useragent_type</span>
<span class="t" style="left:476.74px;top:748px;font-size:12px;font-weight:bold;color:#3a3a3a;transform:scaleX(0.9688);">string</span>
<span class="t" style="left:534.25px;top:746px;font-size:14px;color:#666;transform:scaleX(0.9753);">Distinct</span>
<span class="t" style="left:598.95px;top:746px;font-size:14px;color:#666;transform:scaleX(0.9799);">Min</span>
<span class="t" style="left:640.40px;top:746px;font-size:14px;color:#666;transform:scaleX(0.9132);">Max</span>
<span class="t" style="left:683.87px;top:746px;font-size:14px;color:#bdbdbd;transform:scaleX(0.8833);text-decoration:line-through">Avg</span>
<span class="t" style="left:724.62px;top:746px;font-size:14px;color:#bdbdbd;transform:scaleX(0.9110);text-decoration:line-through">Sum</span>
<span class="t" style="left:771.74px;top:746px;font-size:14px;color:#666;transform:scaleX(0.9363);">Count</span>
<span class="t" style="left:826.82px;top:746px;font-size:14px;color:#666;transform:scaleX(0.9540);">First</span>
<span class="t" style="left:872.71px;top:746px;font-size:14px;color:#666;transform:scaleX(0.9531);">Last</span>
<svg class="a" style="left:272.7px;top:774px" width="13.3" height="13.8" viewBox="0 0 13.3 13.8"><path d="M6.65 0 L9.6 3.2 H7.85 V5.7 H10.1 V3.95 L13.3 6.9 L10.1 9.85 V8.1 H7.85 V10.6 H9.6 L6.65 13.8 L3.7 10.6 H5.45 V8.1 H3.2 V9.85 L0 6.9 L3.2 3.95 V5.7 H5.45 V3.2 H3.7 Z" fill="#c2c2c2"/></svg>
<span class="t" style="left:288.53px;top:776px;font-size:12.5px;color:#222;transform:scaleX(0.9787);">useragent_category</span>
<span class="t" style="left:476.74px;top:776px;font-size:12px;font-weight:bold;color:#3a3a3a;transform:scaleX(0.9688);">string</span>
<span class="t" style="left:534.25px;top:774px;font-size:14px;color:#666;transform:scaleX(0.9753);">Distinct</span>
<span class="t" style="left:598.95px;top:774px;font-size:14px;color:#666;transform:scaleX(0.9799);">Min</span>
<span class="t" style="left:640.40px;top:774px;font-size:14px;color:#666;transform:scaleX(0.9132);">Max</span>
<span class="t" style="left:683.87px;top:774px;font-size:14px;color:#bdbdbd;transform:scaleX(0.8833);text-decoration:line-through">Avg</span>
<span class="t" style="left:724.62px;top:774px;font-size:14px;color:#bdbdbd;transform:scaleX(0.9110);text-decoration:line-through">Sum</span>
<span class="t" style="left:771.74px;top:774px;font-size:14px;color:#666;transform:scaleX(0.9363);">Count</span>
<span class="t" style="left:826.82px;top:774px;font-size:14px;color:#666;transform:scaleX(0.9540);">First</span>
<div class="a" style="left:866px;top:768px;width:39px;height:26px;background:#5d2a74;border:1px solid #53236a;border-radius:3.5px"></div>
<span class="t" style="left:873.06px;top:774px;font-size:14px;font-weight:bold;color:#fff;transform:scaleX(0.8897);">Last</span>
<span class="t" style="left:922.78px;top:775px;font-size:12.5px;color:#222;transform:scaleX(0.9693);">Ordered by:</span>
<div class="a" style="left:989px;top:769px;width:220px;height:26px;border:1px solid #ccc;background:#fff"></div>
<span class="t" style="left:993.92px;top:776px;font-size:12.5px;color:#222;transform:scaleX(0.9840);">server_ts</span>
<svg class="a" style="left:1195px;top:780px" width="8" height="5" viewBox="0 0 8 5"><path d="M0 .4 H7.2 L3.6 4.3 Z" fill="#111"/></svg>
</div>
<div class="a" style="left:1254px;top:281px;width:15px;height:497px;background:#fafafa;border-left:1px solid #e8e8e8"></div>
<div class="a" style="left:1258px;top:282px;width:8px;height:228px;background:#c1c1c1;border-radius:4px"></div>
<div class="a" style="left:230px;top:778px;width:1040px;height:1px;background:#dfe0e1"></div>
</body>
</html>
